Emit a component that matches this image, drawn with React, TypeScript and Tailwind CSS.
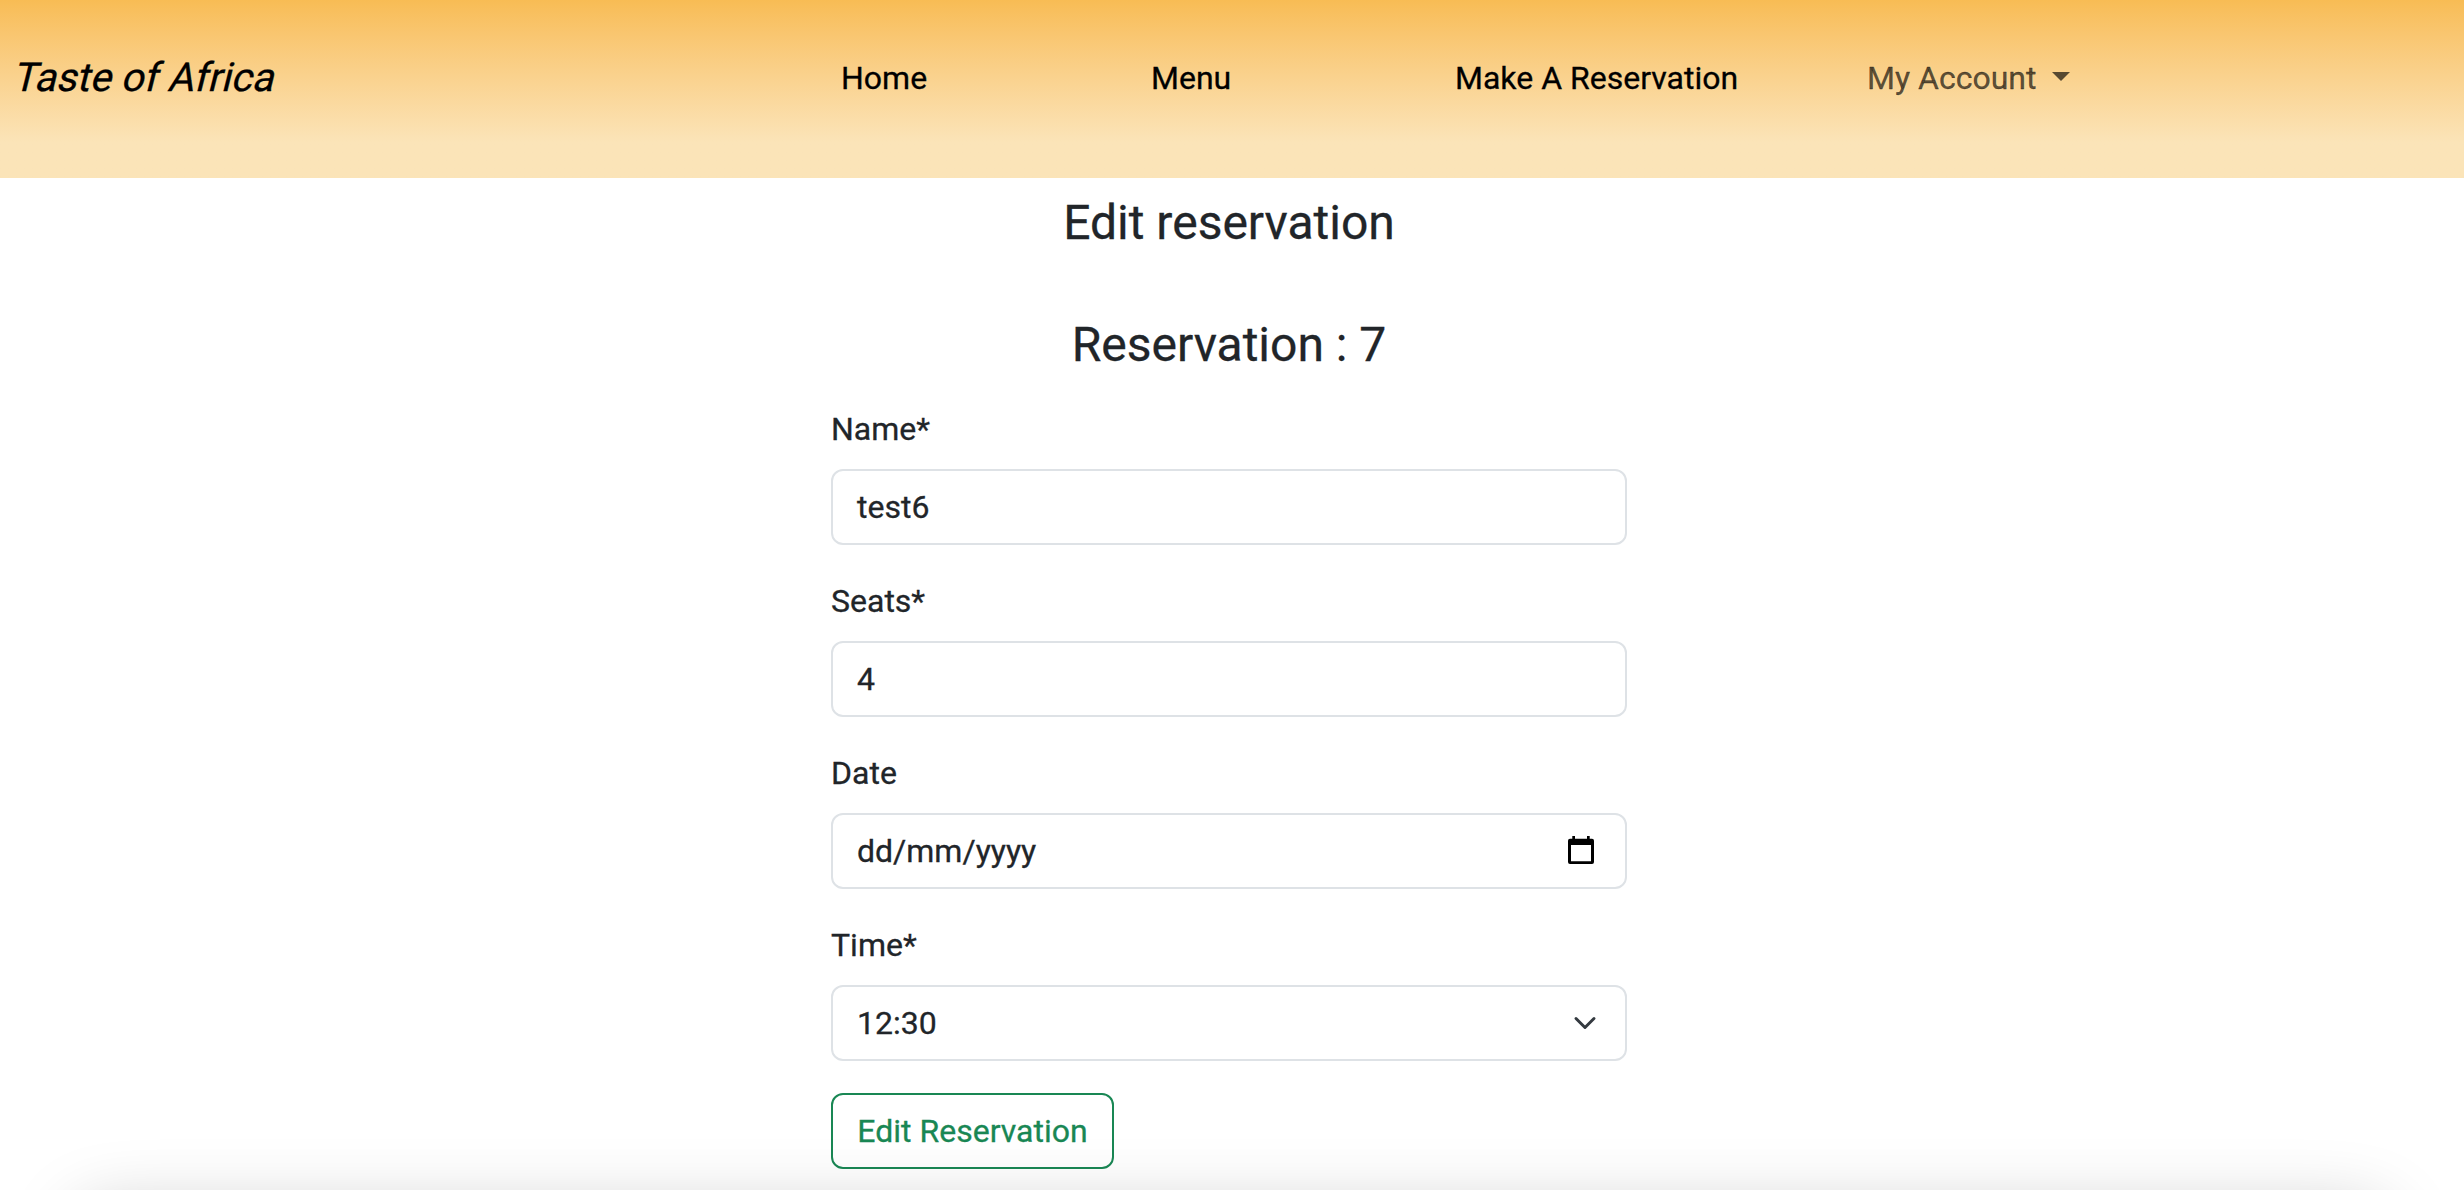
import type { ReactNode } from "react";

function Field({ label, value, icon }: { label: string; value: string; icon?: ReactNode }) {
  return (
    <div className="mb-8">
      <div className="mb-4 h-12 leading-[48px]">{label}</div>
      <div className="flex h-[76px] w-full items-center rounded-[12px] border-2 border-[#dee2e6] px-6">
        <span className="flex-1">{value}</span>
        {icon}
      </div>
    </div>
  );
}

const CalendarIcon = () => (
  <svg width="26" height="28" viewBox="0 0 26 28" className="mr-[7px] mb-[2px]" fill="#000" fillRule="evenodd">
    <path d="M4.300 0H7V2.700H19V0H21.700V2.700H24Q26 2.700 26 4.700V26Q26 28 24 28H2Q0 28 0 26V4.700Q0 2.700 2 2.700H4.300ZM3 9V25.300H23V9Z" />
  </svg>
);

const ChevronIcon = () => (
  <svg
    width="24"
    height="24"
    viewBox="0 0 16 16"
    className="mr-1"
    fill="none"
    stroke="#343a40"
    strokeWidth="2"
    strokeLinecap="round"
    strokeLinejoin="round"
  >
    <path d="m2 5 6 6 6-6" />
  </svg>
);

export default function App() {
  return (
    <div className="relative h-[1190px] overflow-hidden bg-white font-['Roboto',sans-serif] text-[32px] text-[#212529] [-webkit-text-stroke:0.3px]">
      <header className="flex h-[178px] items-start bg-linear-to-b from-[#f8bc54] to-[#fbe4b8] to-80% pt-[54px] leading-[48px] text-black">
        <div className="w-[841px] pl-3 text-[40px]">
          <span className="inline-block origin-[0_37px] -skew-x-[14deg]">Taste of Africa</span>
        </div>
        <div className="w-[310px]">Home</div>
        <div className="w-[304px]">Menu</div>
        <div className="w-[412px]">Make A Reservation</div>
        <div className="flex items-center text-black/65">
          My Account
          <span className="mb-[3px] ml-4 border-x-[9px] border-t-[9px] border-x-transparent border-t-current" />
        </div>
      </header>
      <main className="mr-[837px] ml-[831px] pt-4">
        <h1 className="text-center text-[48px] font-normal leading-[57px]">Edit reservation</h1>
        <h1 className="mt-[65px] mb-8 text-center text-[48px] font-normal leading-[57px]">Reservation : 7</h1>
        <Field label="Name*" value="test6" />
        <Field label="Seats*" value="4" />
        <Field label="Date" value="dd/mm/yyyy" icon={<CalendarIcon />} />
        <Field label="Time*" value="12:30" icon={<ChevronIcon />} />
        <button className="block h-[76px] w-[283px] rounded-[12px] border-2 border-[#198754] text-[#198754]">
          Edit Reservation
        </button>
      </main>
      {/* soft shadow rising from the bottom edge */}
      <div className="pointer-events-none absolute inset-x-[75px] top-[1210px] h-[200px] rounded-[30px] shadow-[0_0_70px_rgba(0,0,0,0.22)]" />
    </div>
  );
}
